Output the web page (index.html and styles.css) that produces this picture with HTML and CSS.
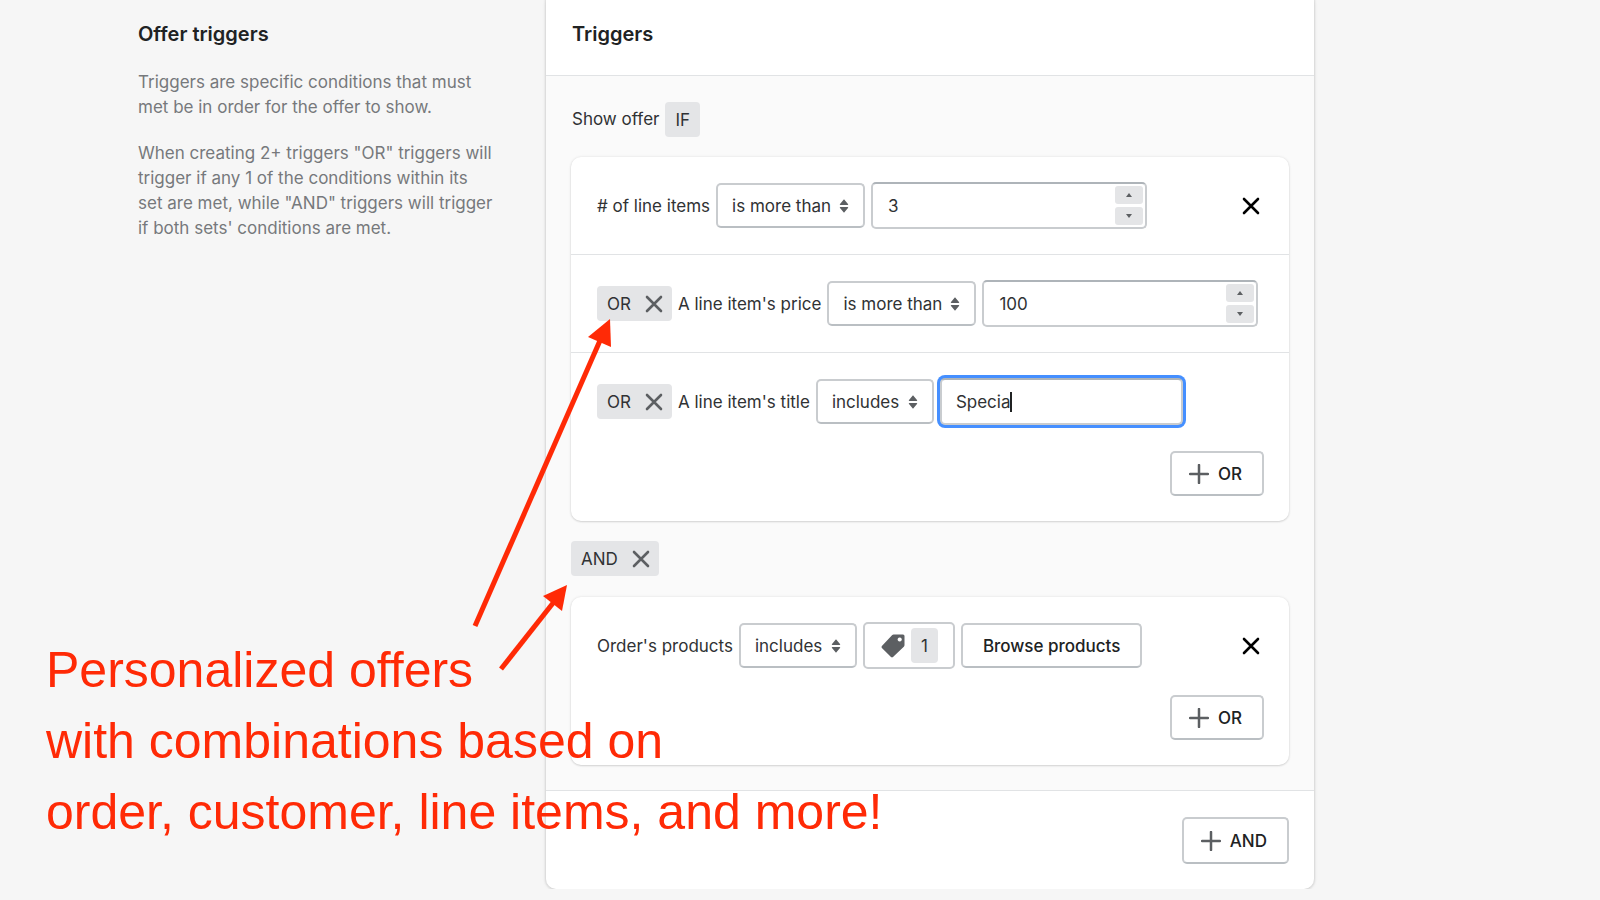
FILE: index.html
```html
<!DOCTYPE html>
<html lang="en">
<head>
    <meta charset="UTF-8">
    <meta name="viewport" content="width=device-width, initial-scale=1.0">
    <title>Offer triggers</title>
    <link rel="stylesheet" href="styles.css">
</head>
<body>
    <!-- shared icons -->
    <svg class="icon-defs" width="0" height="0" aria-hidden="true">
        <symbol id="icon-x" viewBox="0 0 26 26">
            <path d="M6 6l14 14M20 6L6 20" fill="none" stroke="currentColor" stroke-width="2.6" stroke-linecap="round"/>
        </symbol>
        <symbol id="icon-plus" viewBox="0 0 20 20">
            <path d="M10 1v18M1 10h18" fill="none" stroke="currentColor" stroke-width="2.5" stroke-linecap="round"/>
        </symbol>
        <symbol id="icon-sort" viewBox="0 0 10 14">
            <path d="M5 0.3L9.2 5.2Q9.4 6 8.5 6H1.5Q0.6 6 0.8 5.2ZM5 13.7L9.2 8.8Q9.4 8 8.5 8H1.5Q0.6 8 0.8 8.8Z" fill="currentColor"/>
        </symbol>
        <symbol id="icon-up" viewBox="0 0 8 6">
            <path d="M4 1L7 5H1Z" fill="currentColor"/>
        </symbol>
        <symbol id="icon-down" viewBox="0 0 8 6">
            <path d="M4 5L7 1H1Z" fill="currentColor"/>
        </symbol>
        <symbol id="icon-tag" viewBox="0 0 24 24">
            <path fill-rule="evenodd" d="M12.6 0.5H22Q23.5 0.5 23.5 2V11Q23.5 12 22.8 12.7L12 23.1Q11 24 10 23.1L0.9 14Q0 13 0.9 12L11 1.2Q11.7 0.5 12.6 0.5ZM18.7 3.4a2.1 2.1 0 1 0 0.01 0Z" fill="currentColor"/>
        </symbol>
    </svg>

    <main class="page">
        <section class="intro">
            <h2>Offer triggers</h2>
            <p>Triggers are specific conditions that must met be in order for the offer to show.</p>
            <p>When creating 2+ triggers "OR" triggers will trigger if any 1 of the conditions within its set are met, while "AND" triggers will trigger if both sets' conditions are met.</p>
        </section>

        <form class="card">
            <div class="card-header">
                <h2>Triggers</h2>
            </div>

            <div class="card-section">
                <div class="show-offer">Show offer <span class="badge">IF</span></div>

                <div class="group">
                    <div class="rule">
                        <div class="rule-row">
                            <label for="count-op"># of line items</label>
                            <div class="select">
                                <select id="count-op"><option>is more than</option></select>
                                <svg><use href="#icon-sort"/></svg>
                            </div>
                            <div class="number">
                                <input type="number" value="3" aria-label="Number of line items">
                                <div class="spinner">
                                    <button type="button" aria-label="Increase"><svg><use href="#icon-up"/></svg></button>
                                    <button type="button" aria-label="Decrease"><svg><use href="#icon-down"/></svg></button>
                                </div>
                            </div>
                            <button type="button" class="remove" aria-label="Remove set"><svg><use href="#icon-x"/></svg></button>
                        </div>
                    </div>

                    <div class="rule">
                        <div class="rule-row">
                            <span class="badge">OR <button type="button" aria-label="Remove"><svg><use href="#icon-x"/></svg></button></span>
                            <label for="price-op">A line item's price</label>
                            <div class="select">
                                <select id="price-op"><option>is more than</option></select>
                                <svg><use href="#icon-sort"/></svg>
                            </div>
                            <div class="number">
                                <input type="number" value="100" aria-label="Price">
                                <div class="spinner">
                                    <button type="button" aria-label="Increase"><svg><use href="#icon-up"/></svg></button>
                                    <button type="button" aria-label="Decrease"><svg><use href="#icon-down"/></svg></button>
                                </div>
                            </div>
                        </div>
                    </div>

                    <div class="rule">
                        <div class="rule-row">
                            <span class="badge">OR <button type="button" aria-label="Remove"><svg><use href="#icon-x"/></svg></button></span>
                            <label for="title-op">A line item's title</label>
                            <div class="select">
                                <select id="title-op"><option>includes</option></select>
                                <svg><use href="#icon-sort"/></svg>
                            </div>
                            <div class="text focused">
                                <input type="text" value="Specia" aria-label="Title">
                                <span class="caret"></span>
                            </div>
                        </div>
                        <div class="rule-actions">
                            <button type="button" class="btn btn-icon"><svg><use href="#icon-plus"/></svg>OR</button>
                        </div>
                    </div>
                </div>

                <div class="join">
                    <span class="badge">AND <button type="button" aria-label="Remove"><svg><use href="#icon-x"/></svg></button></span>
                </div>

                <div class="group">
                    <div class="rule">
                        <div class="rule-row">
                            <label for="products-op">Order's products</label>
                            <div class="select">
                                <select id="products-op"><option>includes</option></select>
                                <svg><use href="#icon-sort"/></svg>
                            </div>
                            <div class="tag-count">
                                <svg><use href="#icon-tag"/></svg>
                                <span class="badge">1</span>
                            </div>
                            <button type="button" class="btn">Browse products</button>
                            <button type="button" class="remove" aria-label="Remove set"><svg><use href="#icon-x"/></svg></button>
                        </div>
                        <div class="rule-actions">
                            <button type="button" class="btn btn-icon"><svg><use href="#icon-plus"/></svg>OR</button>
                        </div>
                    </div>
                </div>
            </div>

            <div class="card-footer">
                <button type="button" class="btn btn-icon btn-large"><svg><use href="#icon-plus"/></svg>AND</button>
            </div>
        </form>
    </main>

    <!-- callout on top of the page -->
    <svg class="arrows" viewBox="0 0 140 360" aria-hidden="true">
        <g stroke="#ff2a06" stroke-width="5" fill="none">
            <path d="M5 316L132 26"/>
            <path d="M31 359L87 288"/>
        </g>
        <g fill="#ff2a06">
            <path d="M140 9L141 37L118 27Z"/>
            <path d="M97 275L92 301L73 286Z"/>
        </g>
    </svg>
    <p class="callout">Personalized offers<br>with combinations based on<br>order, customer, line items, and more!</p>
</body>
</html>
```
FILE: styles.css
```css
* {
    box-sizing: border-box;
}

body {
    margin: 0;
    background: #f6f6f6;
    color: #303234;
    font-family: Inter, "Liberation Sans", sans-serif;
    font-size: 17px;
    line-height: 25px;
}

h2 {
    margin: 0;
    font-size: 20px;
    line-height: 28px;
    font-weight: 600;
    color: #202223;
}

p {
    margin: 0;
}

button, input, select {
    font: inherit;
    color: inherit;
    margin: 0;
}

button {
    cursor: pointer;
}

.icon-defs {
    position: absolute;
}

.page {
    display: grid;
    grid-template-columns: minmax(0, 1fr) minmax(0, 2fr);
    gap: 24px;
    margin: 0 286px 0 138px;
}

.intro {
    padding: 20px 27px 0 0;
    color: #76797c;
}

.intro h2 {
    margin-bottom: 22px;
}

.intro p {
    margin-bottom: 21px;
}

/* card */
.card {
    align-self: start;
    background: #fff;
    border-radius: 0 0 10px 10px;
    box-shadow: 0 0 2px 1px rgba(23, 24, 24, 0.1), 0 1px 4px rgba(0, 0, 0, 0.08);
}

.card-header {
    padding: 20px 26px 27px;
}

.card-section {
    padding: 25px;
    background: #fafafa;
    border-top: 1px solid #e1e3e5;
    border-bottom: 1px solid #e1e3e5;
}

.card-footer {
    display: flex;
    justify-content: flex-end;
    padding: 26px 25px 25px;
}

.show-offer {
    display: flex;
    align-items: center;
    gap: 6px;
    margin-bottom: 20px;
    padding: 1px 1px 0;
}

.join {
    display: flex;
    margin: 20px 0 21px;
}

.group {
    background: #fff;
    border-radius: 10px;
    box-shadow: 0 0 3px rgba(23, 24, 24, 0.1), 0 1px 2px rgba(0, 0, 0, 0.12);
}

.rule {
    padding: 25px 25px 25px 26px;
}

.rule + .rule {
    border-top: 1px solid #e1e3e5;
}

.rule-row {
    display: flex;
    align-items: center;
    gap: 6px;
    min-height: 47px;
}

.rule-row label {
    padding-top: 1px;
    white-space: nowrap;
}

.rule-actions {
    display: flex;
    justify-content: flex-end;
    margin-top: 26px;
}

/* badges */
.badge {
    display: inline-flex;
    align-items: center;
    gap: 10px;
    height: 35px;
    padding: 1px 10px 0;
    background: #e4e5e7;
    border-radius: 4px;
}

.badge button {
    display: flex;
    margin-right: -5px;
    padding: 0;
    background: none;
    border: none;
    color: #5c5f62;
}

.badge button svg, .remove svg {
    width: 26px;
    height: 26px;
}

.remove {
    display: flex;
    margin-left: auto;
    padding: 0;
    background: none;
    border: none;
    color: #000;
}

/* controls */
.select {
    position: relative;
}

.select select {
    display: block;
    height: 45px;
    padding: 2px 32px 0 14px;
    appearance: none;
    background: #fff;
    border: 2px solid #c9cccf;
    border-bottom-color: #babfc3;
    border-radius: 5px;
}

.select svg {
    position: absolute;
    top: 16px;
    right: 16px;
    width: 10px;
    height: 14px;
    color: #5c5f62;
    pointer-events: none;
}

.number, .text {
    display: flex;
    align-items: center;
    width: 276px;
    height: 47px;
    background: #fff;
    border: 2px solid #c9cccf;
    border-top-color: #aeb4b9;
    border-radius: 5px;
}

.number input, .text input {
    min-width: 0;
    padding: 2px 0 0;
    background: none;
    border: none;
    outline: none;
}

.number input {
    flex: 1;
    padding-left: 15px;
    appearance: textfield;
}

.number input::-webkit-inner-spin-button {
    display: none;
}

.spinner {
    display: flex;
    flex-direction: column;
    gap: 3px;
    padding-right: 2px;
}

.spinner button {
    display: flex;
    align-items: center;
    justify-content: center;
    width: 28px;
    height: 18px;
    padding: 0;
    background: #e4e5e7;
    border: none;
    border-radius: 3px;
    color: #5c5f62;
}

.spinner svg {
    width: 8px;
    height: 6px;
}

.text {
    width: 243px;
    padding-left: 14px;
}

.text input {
    field-sizing: content;
}

.focused {
    box-shadow: 0 0 0 3px #458fff;
}

.caret {
    width: 2px;
    height: 20px;
    background: #202223;
}

.tag-count {
    display: flex;
    align-items: center;
    gap: 6px;
    height: 47px;
    padding: 0 15px 0 16px;
    border: 2px solid #c9cccf;
    border-radius: 5px;
}

.tag-count svg {
    width: 24px;
    height: 24px;
    color: #5c5f62;
}

.btn {
    display: flex;
    align-items: center;
    height: 45px;
    padding: 1px 20px 0;
    background: #fff;
    border: 2px solid #c9cccf;
    border-bottom-color: #babfc3;
    border-radius: 5px;
    color: #202223;
    font-weight: 500;
    white-space: nowrap;
}

.btn-icon {
    gap: 9px;
    padding: 1px 20px 0 17px;
}

.btn svg {
    width: 20px;
    height: 20px;
    color: #5c5f62;
}

.btn-large {
    height: 47px;
}

/* callout */
.callout {
    position: absolute;
    top: 635px;
    left: 46px;
    color: #ff2a06;
    font-family: "Liberation Sans", Arial, sans-serif;
    font-size: 50px;
    line-height: 71px;
    white-space: nowrap;
}

.arrows {
    position: absolute;
    top: 310px;
    left: 470px;
    width: 140px;
    height: 360px;
    overflow: visible;
    pointer-events: none;
}
```
